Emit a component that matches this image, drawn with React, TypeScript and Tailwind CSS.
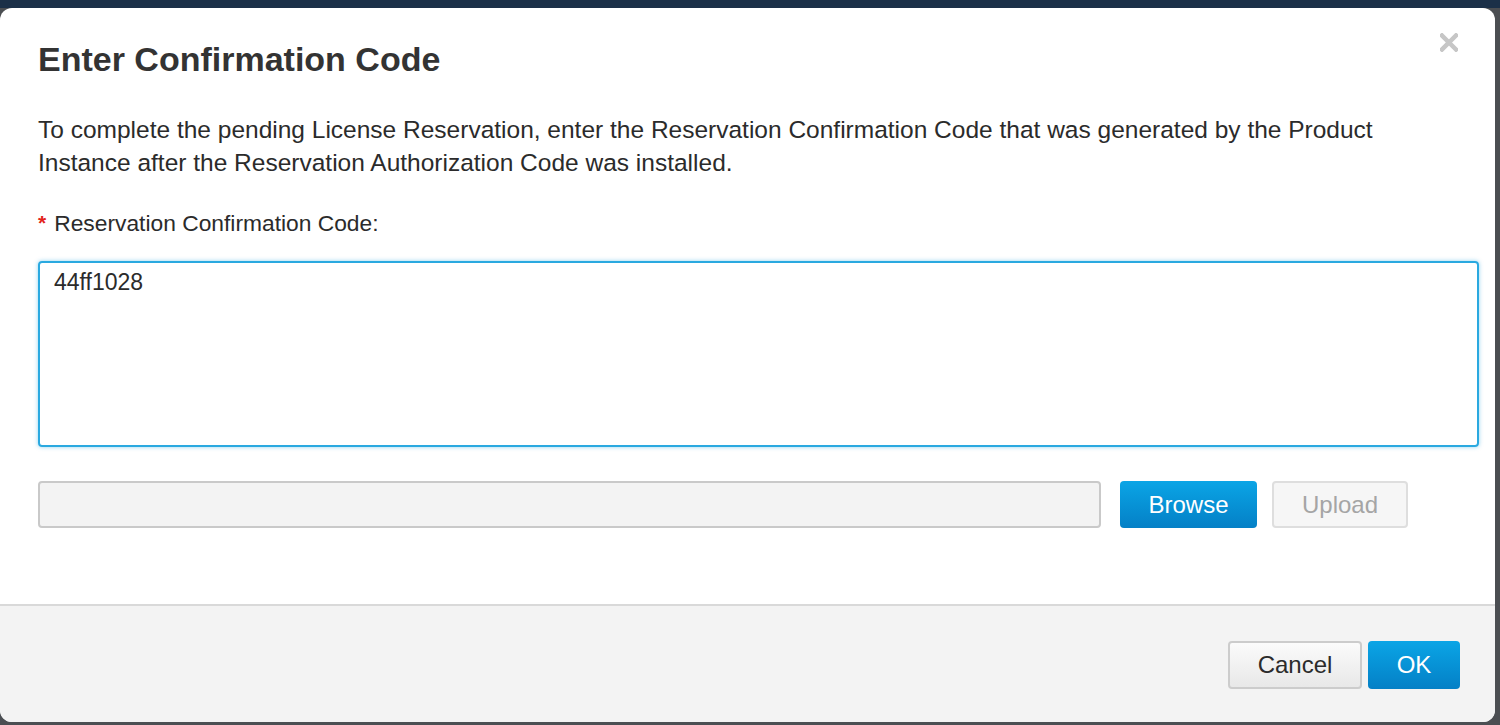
import { useState } from 'react';

export default function App() {
  const [code, setCode] = useState('44ff1028');

  return (
    <div
      className="h-[725px] w-[1500px] overflow-hidden bg-[#4b4e52] pt-[8px] pr-[5px] pb-[3px]"
      style={{ fontFamily: '"Liberation Sans", Arial, sans-serif' }}
    >
      <div className="absolute left-0 top-0 h-[8px] w-[1500px] bg-[#1b3048]" />
      <div className="relative flex h-full flex-col overflow-hidden rounded-[12px] bg-white">
        {/* 标题 */}
        <div className="relative px-[38px] pt-[32px]">
          <h1 className="text-[34px] font-bold leading-[38px] text-[#333333]">Enter Confirmation Code</h1>
          <button className="absolute right-[37px] top-[25px] text-[#c6c6c6]">
            <svg width="18" height="19" viewBox="0 0 18 19">
              <path d="M2 2.5L16 16.5M16 2.5L2 16.5" stroke="currentColor" strokeWidth="4.5" strokeLinecap="square" />
            </svg>
          </button>
        </div>

        {/* 内容 */}
        <div className="flex-1 px-[38px] pt-[35px]">
          <p className="max-w-[1345px] text-[24.5px] leading-[33px] text-[#2b2b2b]">
            To complete the pending License Reservation, enter the Reservation Confirmation Code that was generated by the Product
            Instance after the Reservation Authorization Code was installed.
          </p>

          <label className="mt-[31px] flex items-center gap-[8px] text-[22.8px] leading-[26px] text-[#2b2b2b]">
            <span className="text-[21px] font-bold text-[#e2231a]">*</span>
            Reservation Confirmation Code:
          </label>

          <textarea
            value={code}
            onChange={(e) => setCode(e.target.value)}
            className="mt-[25px] block h-[186px] w-[1441px] resize-none rounded-[4px] border-2 border-[#2aa9e0] px-[14px] pt-[6px] text-[23px] leading-[26px] text-[#2b2b2b] shadow-[0_0_4px_rgba(42,169,224,0.5)] outline-none"
          />

          <div className="mt-[34px] flex items-center">
            <div className="h-[47px] w-[1063px] rounded-[4px] border-2 border-[#c9c9c9] bg-[#f3f3f3]" />
            <button className="ml-[19px] h-[47px] w-[137px] rounded-[4px] bg-gradient-to-b from-[#0ba5e6] to-[#0580c6] text-[24px] text-white">
              Browse
            </button>
            <button
              disabled
              className="ml-[15px] h-[47px] w-[136px] rounded-[4px] border-2 border-[#dedede] bg-[#f6f6f6] text-[24px] text-[#a5a5a5]"
            >
              Upload
            </button>
          </div>
        </div>

        {/* 底部按钮 */}
        <div className="flex h-[118px] items-start justify-end gap-[6px] border-t-2 border-[#d9d9d9] bg-[#f3f3f3] pt-[35px] pr-[35px]">
          <button className="h-[48px] w-[134px] rounded-[4px] border-2 border-[#cccccc] bg-gradient-to-b from-[#fbfbfb] to-[#e8e8e8] text-[24px] text-[#2b2b2b]">
            Cancel
          </button>
          <button className="h-[48px] w-[92px] rounded-[4px] bg-gradient-to-b from-[#0ba5e6] to-[#0580c6] text-[24px] text-white">
            OK
          </button>
        </div>
      </div>
    </div>
  );
}
